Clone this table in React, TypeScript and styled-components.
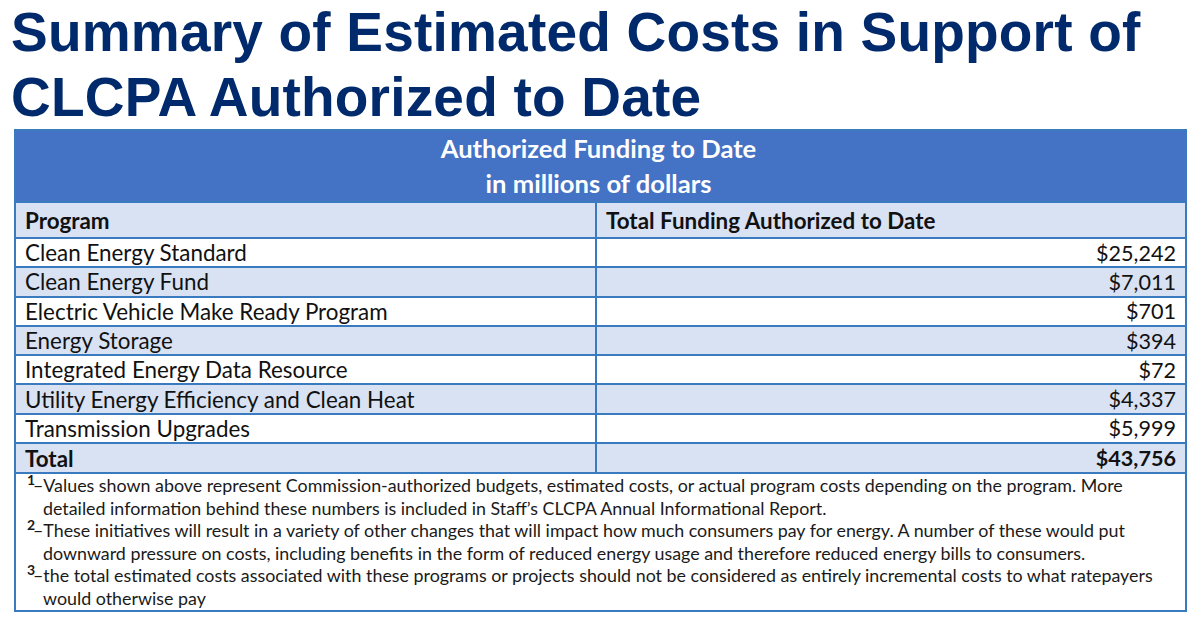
import React from "react";
import styled, { createGlobalStyle } from "styled-components";

const Global = createGlobalStyle`
  html, body { margin: 0; padding: 0; background: #ffffff; }
  body { font-family: "Lato", "Open Sans", sans-serif; }
`;

const Page = styled.div`
  width: 1200px;
  height: 623px;
  overflow: hidden;
  background: #ffffff;
  display: flex;
  flex-direction: column;
`;

const Title = styled.h1`
  margin: 0;
  padding: 0 0 0 11px;
  font-family: "Liberation Sans", Arial, sans-serif;
  font-weight: 700;
  font-size: 55px;
  line-height: 65px;
  color: #002a6c;
  letter-spacing: 0.2px;
`;

const Table = styled.div`
  margin: -1px 0 0 14px;
  width: 1173px;
  box-sizing: border-box;
  border: 2px solid #3a7bc0;
  font-family: "Lato", "Open Sans", sans-serif;
  color: #111111;
`;

const Banner = styled.div`
  background: #4472c4;
  color: #ffffff;
  font-weight: 700;
  font-size: 25.6px;
  line-height: 35px;
  text-align: center;
  height: 70px;
  box-sizing: border-box;
  padding-right: 4px;
`;

const Row = styled.div<{ $shade?: boolean; $h?: number }>`
  display: grid;
  grid-template-columns: 579px 1fr;
  height: ${(p) => p.$h ?? 29.3}px;
  box-sizing: border-box;
  border-top: 2px solid #3a7bc0;
  background: ${(p) => (p.$shade ? "#d9e2f3" : "#ffffff")};
`;

const Cell = styled.div<{ $right?: boolean; $bold?: boolean; $divider?: boolean; $size?: number }>`
  display: flex;
  align-items: center;
  justify-content: ${(p) => (p.$right ? "flex-end" : "flex-start")};
  padding: 0 9px 0 9px;
  font-size: ${(p) => p.$size ?? 22.4}px;
  font-weight: ${(p) => (p.$bold ? 700 : 400)};
  border-left: ${(p) => (p.$divider ? "2px solid #3a7bc0" : "none")};
  white-space: nowrap;
`;

const Notes = styled.div`
  border-top: 2px solid #3a7bc0;
  padding: 0 0 0 11px;
  height: 138px;
  box-sizing: border-box;
  font-size: 17.85px;
  line-height: 22.6px;
  color: #1a1a1a;
`;

const Note = styled.div`
  display: grid;
  grid-template-columns: 16px 1fr;
`;

const Mark = styled.span`
  font-weight: 700;
  font-size: 14px;
  line-height: 14px;
  margin-top: -1px;
`;

const Line = styled.span<{ $hang?: boolean }>`
  display: block;
  white-space: nowrap;
  margin-left: ${(p) => (p.$hang ? "-10px" : "0")};
`;

const rows: [string, string][] = [
  ["Clean Energy Standard", "$25,242"],
  ["Clean Energy Fund", "$7,011"],
  ["Electric Vehicle Make Ready Program", "$701"],
  ["Energy Storage", "$394"],
  ["Integrated Energy Data Resource", "$72"],
  ["Utility Energy Efficiency and Clean Heat", "$4,337"],
  ["Transmission Upgrades", "$5,999"],
];

const notes: [string, string][] = [
  [
    "\u2013Values shown above represent Commission-authorized budgets, estimated costs, or actual program costs depending on the program. More",
    "detailed information behind these numbers is included in Staff\u2019s CLCPA Annual Informational Report.",
  ],
  [
    "\u2013These initiatives will result in a variety of other changes that will impact how much consumers pay for energy. A number of these would put",
    "downward pressure on costs, including benefits in the form of reduced energy usage and therefore reduced energy bills to consumers.",
  ],
  [
    "\u2013the total estimated costs associated with these programs or projects should not be considered as entirely incremental costs to what ratepayers",
    "would otherwise pay",
  ],
];

export default function App() {
  return (
    <Page>
      <Global />
      <Title>
        Summary of Estimated Costs in Support of
        <br />
        CLCPA Authorized to Date
      </Title>
      <Table>
        <Banner>
          Authorized Funding to Date
          <br />
          in millions of dollars
        </Banner>
        <Row $shade $h={36}>
          <Cell $bold>Program</Cell>
          <Cell $bold $divider>Total Funding Authorized to Date</Cell>
        </Row>
        {rows.map(([name, value], i) => (
          <Row key={name} $shade={i % 2 === 1}>
            <Cell>{name}</Cell>
            <Cell $right $divider $size={21.6}>{value}</Cell>
          </Row>
        ))}
        <Row $shade $h={30}>
          <Cell $bold>Total</Cell>
          <Cell $bold $right $divider $size={21.6}>$43,756</Cell>
        </Row>
        <Notes>
          {notes.map(([a, b], i) => (
            <Note key={i}>
              <Mark>{i + 1}</Mark>
              <span>
                <Line $hang>{a}</Line>
                <Line>{b}</Line>
              </span>
            </Note>
          ))}
        </Notes>
      </Table>
    </Page>
  );
}
